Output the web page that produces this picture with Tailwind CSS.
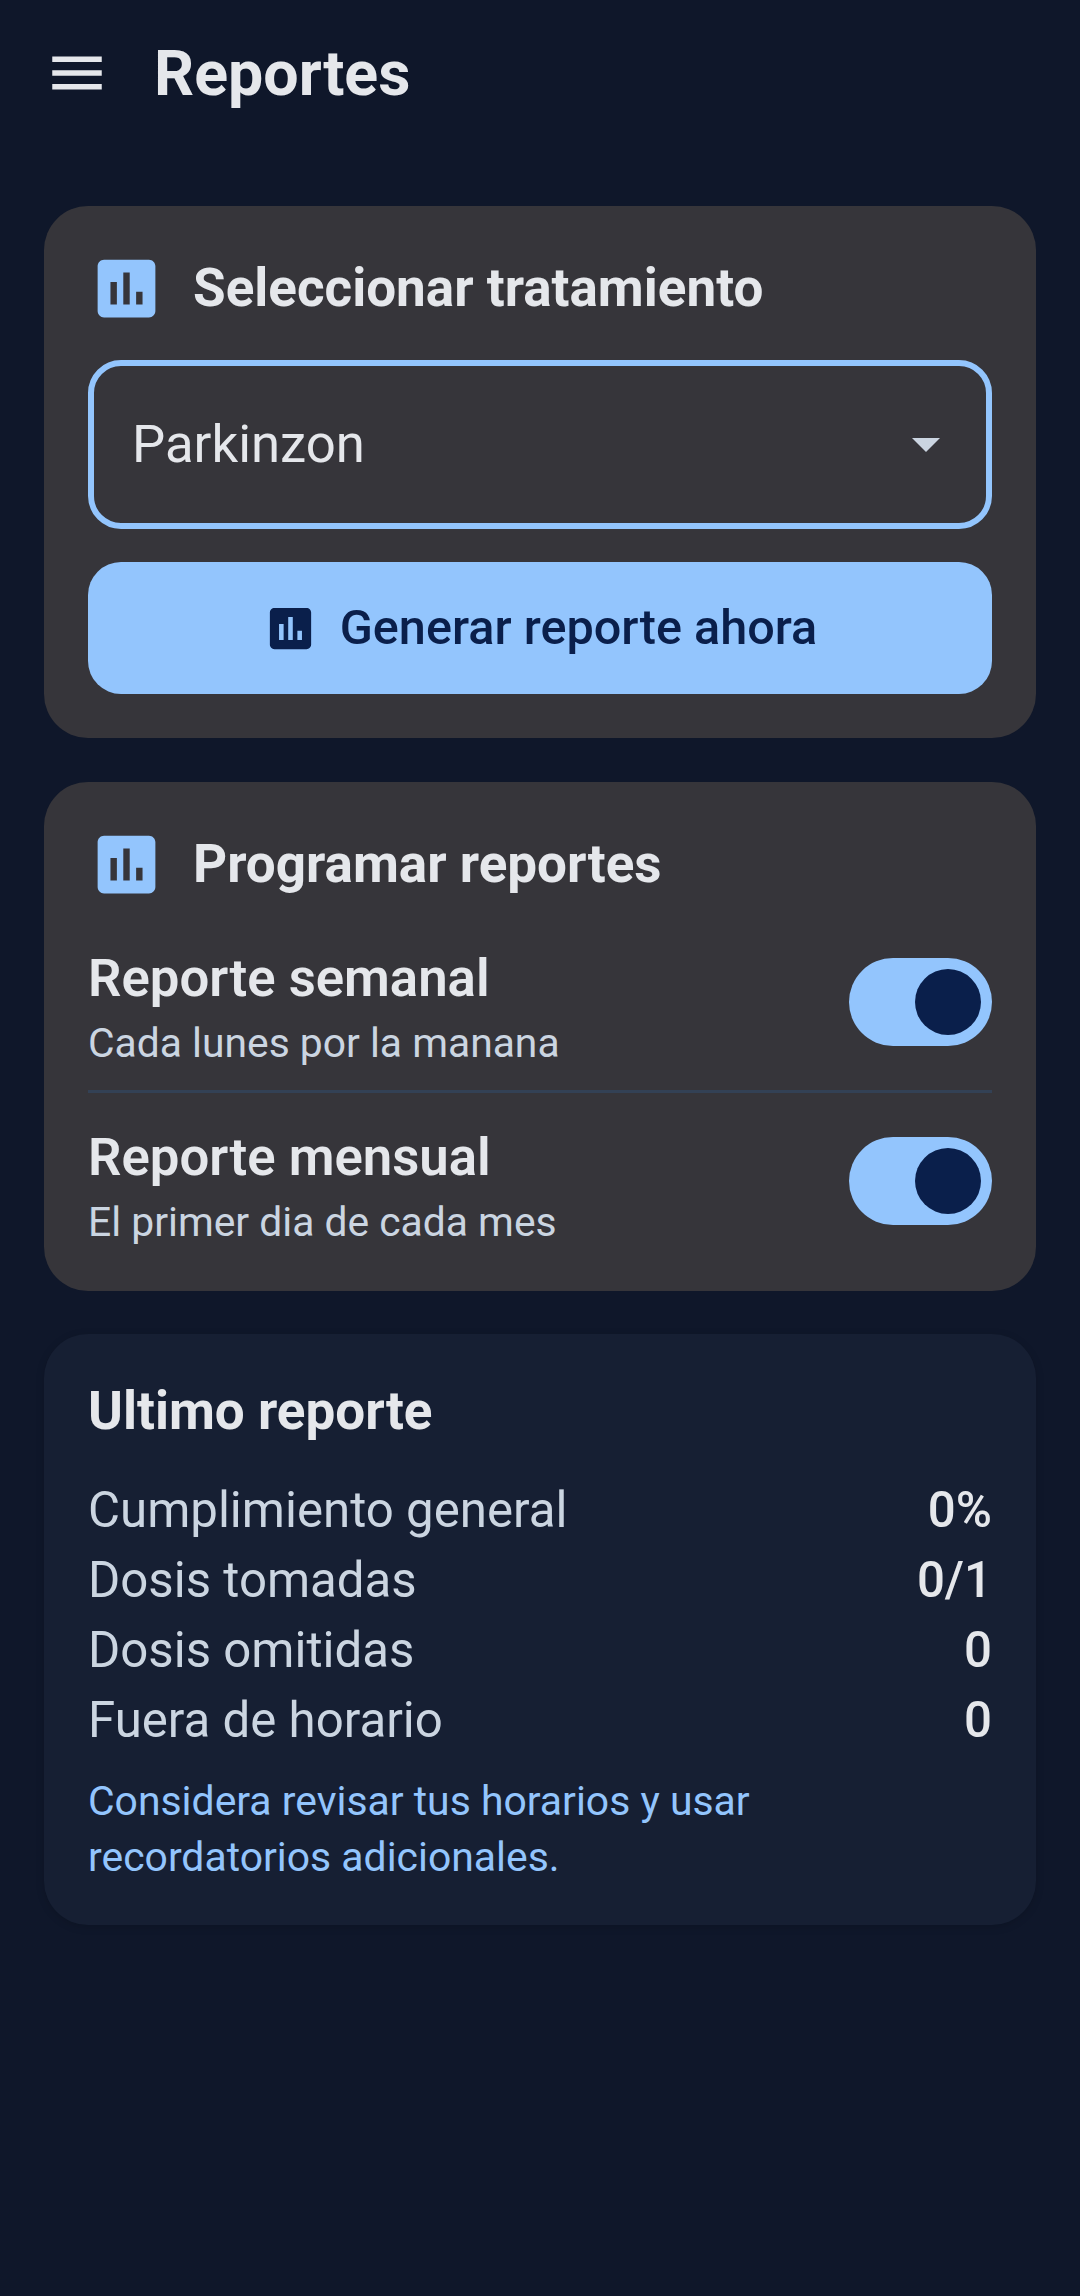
<!DOCTYPE html>
<html lang="es">
<head>
    <meta charset="UTF-8">
    <meta name="viewport" content="width=device-width, initial-scale=1.0">
    <title>Reportes</title>
    <script src="https://cdn.jsdelivr.net/npm/@tailwindcss/browser@4"></script>
</head>
<body class="bg-[#0f172a] text-[#e5e7eb] antialiased font-[family-name:Roboto,sans-serif]">
    <div class="w-[1080px] h-[2296px] overflow-hidden">

        <!-- Top bar -->
        <header class="flex items-center h-[148px] pl-[44px]">
            <svg class="w-[66px] h-[66px] -mt-[2px]" viewBox="0 0 24 24" fill="#e5e7eb"><path d="M3 18h18v-2H3v2zm0-5h18v-2H3v2zm0-7v2h18V6H3z"/></svg>
            <h1 class="ml-[44px] text-[62.7px] leading-[72px] font-bold">Reportes</h1>
        </header>

        <main class="px-[44px] pt-[58px] flex flex-col gap-[44px]">

            <!-- Seleccionar tratamiento -->
            <section class="bg-[#36353a] rounded-[44px] p-[44px]">
                <div class="flex items-center gap-[28px] h-[77px]">
                    <svg class="w-[77px] h-[77px]" viewBox="0 0 24 24" fill="#93c5fd"><path d="M19 3H5c-1.1 0-2 .9-2 2v14c0 1.1.9 2 2 2h14c1.1 0 2-.9 2-2V5c0-1.1-.9-2-2-2zM9 17H7v-7h2v7zm4 0h-2V7h2v10zm4 0h-2v-4h2v4z"/></svg>
                    <h2 class="text-[53px] font-bold">Seleccionar tratamiento</h2>
                </div>
                <div class="mt-[33px] h-[169px] border-[6px] border-[#93c5fd] rounded-[33px] flex items-center justify-between pl-[38px] pr-[46px]">
                    <span class="text-[52.7px] text-[#e5e7eb]">Parkinzon</span>
                    <span class="w-0 h-0 border-x-[14px] border-x-transparent border-t-[14px] border-t-[#cbd5e1]"></span>
                </div>
                <button class="mt-[33px] w-full h-[132px] bg-[#93c5fd] rounded-[33px] flex items-center justify-center gap-[22px] text-[#0a1f4b]">
                    <svg class="w-[55px] h-[55px]" viewBox="0 0 24 24" fill="#0a1f4b"><path d="M19 3H5c-1.1 0-2 .9-2 2v14c0 1.1.9 2 2 2h14c1.1 0 2-.9 2-2V5c0-1.1-.9-2-2-2zM9 17H7v-7h2v7zm4 0h-2V7h2v10zm4 0h-2v-4h2v4z"/></svg>
                    <span class="text-[48.6px] font-medium">Generar reporte ahora</span>
                </button>
            </section>

            <!-- Programar reportes -->
            <section class="bg-[#36353a] rounded-[44px] p-[44px]">
                <div class="flex items-center gap-[28px] h-[77px]">
                    <svg class="w-[77px] h-[77px]" viewBox="0 0 24 24" fill="#93c5fd"><path d="M19 3H5c-1.1 0-2 .9-2 2v14c0 1.1.9 2 2 2h14c1.1 0 2-.9 2-2V5c0-1.1-.9-2-2-2zM9 17H7v-7h2v7zm4 0h-2V7h2v10zm4 0h-2v-4h2v4z"/></svg>
                    <h2 class="text-[53px] font-bold">Programar reportes</h2>
                </div>
                <div class="mt-[11px] py-[22px] border-b-[3px] border-[#334155] flex items-center justify-between">
                    <div class="h-[132px]">
                        <p class="text-[52.7px] leading-[84px] font-semibold">Reporte semanal</p>
                        <p class="text-[40.8px] leading-[46px] text-[#cbd5e1]">Cada lunes por la manana</p>
                    </div>
                    <div class="w-[143px] h-[88px] rounded-full bg-[#93c5fd] flex items-center justify-end pr-[11px]">
                        <span class="w-[66px] h-[66px] rounded-full bg-[#0a1f4b]"></span>
                    </div>
                </div>
                <div class="pt-[22px] flex items-center justify-between">
                    <div class="h-[132px]">
                        <p class="text-[52.7px] leading-[84px] font-semibold">Reporte mensual</p>
                        <p class="text-[40.8px] leading-[46px] text-[#cbd5e1]">El primer dia de cada mes</p>
                    </div>
                    <div class="w-[143px] h-[88px] rounded-full bg-[#93c5fd] flex items-center justify-end pr-[11px]">
                        <span class="w-[66px] h-[66px] rounded-full bg-[#0a1f4b]"></span>
                    </div>
                </div>
            </section>

            <!-- Ultimo reporte -->
            <section class="-mt-[1px] bg-[#161f33] rounded-[44px] px-[44px] pt-[44px] pb-[40px] shadow-[0_2px_8px_rgba(0,0,0,0.15)]">
                <h2 class="text-[53px] leading-[66px] font-bold">Ultimo reporte</h2>
                <div class="mt-[31px] text-[49.2px] leading-[70px] text-[#cbd5e1]">
                    <div class="flex justify-between"><span>Cumplimiento general</span><span class="font-medium text-[#e5e7eb]">0%</span></div>
                    <div class="flex justify-between"><span>Dosis tomadas</span><span class="font-medium text-[#e5e7eb]">0/1</span></div>
                    <div class="flex justify-between"><span>Dosis omitidas</span><span class="font-medium text-[#e5e7eb]">0</span></div>
                    <div class="flex justify-between"><span>Fuera de horario</span><span class="font-medium text-[#e5e7eb]">0</span></div>
                </div>
                <p class="mt-[18px] text-[40.9px] leading-[56px] text-[#93c5fd]">Considera revisar tus horarios y usar<br>recordatorios adicionales.</p>
            </section>
        </main>
    </div>
</body>
</html>
